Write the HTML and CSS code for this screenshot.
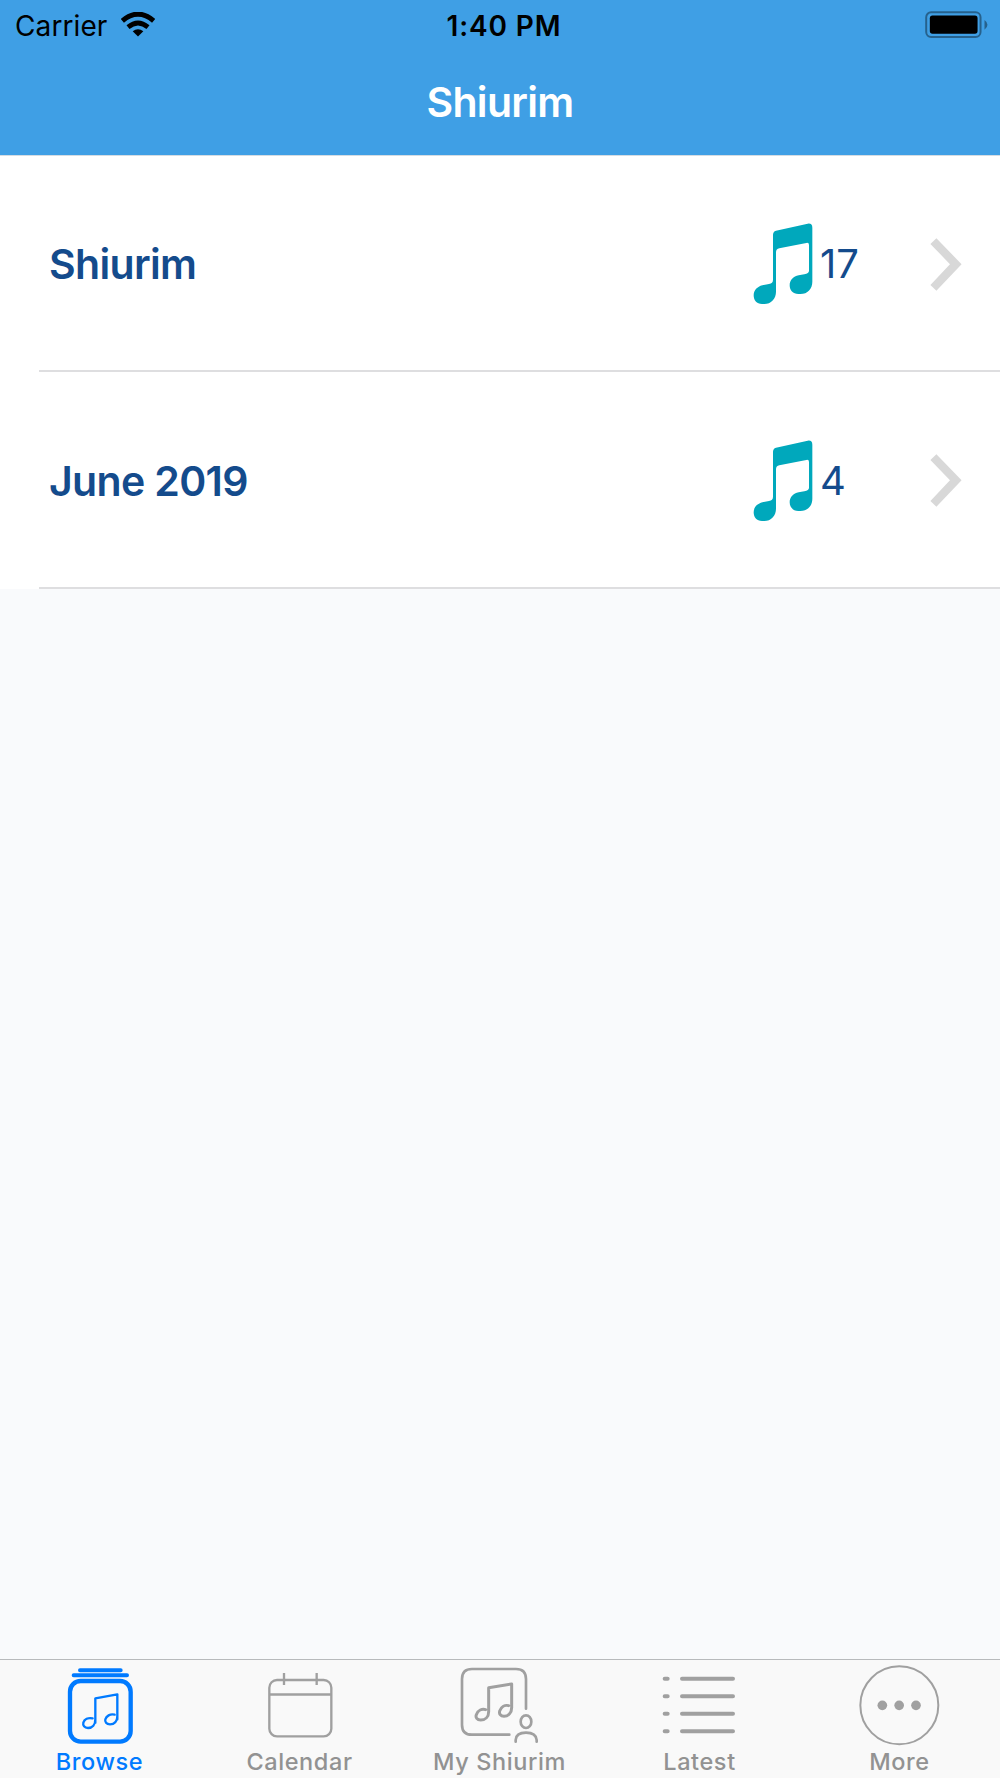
FILE: index.html
```html
<!DOCTYPE html>
<html lang="en">
<head>
<meta charset="utf-8">
<title>Shiurim</title>
<link rel="stylesheet" href="styles.css">
</head>
<body>
<svg class="defs" aria-hidden="true">
  <symbol id="note" viewBox="0 0 180 246">
    <path d="M69 23 L164 2 Q178 0 178 14 V176 C178 197 164 213 142 213 H136 C120 213 110 202 110 187 C110 171 121 161 137 157 L154 154 Q168 151 168 143 V66 Q168 58 160 60 L79 76 Q69 78 69 88 V206 C69 227 54 243 34 243 H27 C11 243 2 232 2 217 C2 202 13 191 28 187 L48 183 Q60 181 60 170 V36 Q60 25 69 23Z"/>
  </symbol>
  <symbol id="chevron" viewBox="0 0 96 160">
    <path d="M19 1 L95 79 L19 159 L1 142 L60 79 L1 18Z"/>
  </symbol>
</svg>
<div class="app">
  <header class="header">
    <div class="status">
      <div class="network">
        <span class="carrier">Carrier</span>
        <svg class="wifi" viewBox="0 0 102 74">
          <g fill="none" stroke="#000">
            <path d="M4 26 Q51 -14 98 26" stroke-width="15"/>
            <path d="M21 45 Q51 20 81 45" stroke-width="14"/>
          </g>
          <path d="M35 57 Q51 45 67 57 L51 73Z"/>
        </svg>
      </div>
      <time class="time">1:40 PM</time>
      <svg class="battery" viewBox="0 0 190 82">
        <rect x="3" y="4" width="165" height="75" rx="15" fill="none" stroke="#26618c" stroke-width="6"/>
        <rect x="14" y="14" width="145" height="55" rx="8"/>
        <path d="M180 27 Q189 33 189 42 Q189 51 180 57Z" fill="#26618c"/>
      </svg>
    </div>
    <h1 class="title">Shiurim</h1>
  </header>
  <main class="list">
    <section class="row">
      <h2 class="name">Shiurim</h2>
      <svg class="note"><use href="#note"/></svg>
      <span class="count">17</span>
      <svg class="chevron"><use href="#chevron"/></svg>
    </section>
    <section class="row">
      <h2 class="name">June 2019</h2>
      <svg class="note"><use href="#note"/></svg>
      <span class="count">4</span>
      <svg class="chevron"><use href="#chevron"/></svg>
    </section>
  </main>
  <nav class="tabs">
    <a class="tab active">
      <svg class="icon" viewBox="0 60 600 264">
        <path d="M240 90.500H362M221 106H381" stroke-width="12"/>
        <rect x="210" y="123" width="182" height="182" rx="32" stroke-width="13"/>
        <path d="M286 248V175L352 163V238M286 238C286 254 277 264 264 264C253 264 248 256 250 248C253 238 264 232 278 235M352 228C352 244 343 253 330 253C319 253 314 246 316 238C319 228 330 221 344 224" stroke-width="7"/>
      </svg>
      <span class="label">Browse</span>
    </a>
    <a class="tab">
      <svg class="icon" viewBox="0 60 600 264">
        <rect x="208" y="120" width="186" height="169" rx="23" stroke-width="7"/>
        <path d="M208 163.500H394M252 99V135M350 99V135" stroke-width="7" stroke-linecap="butt"/>
      </svg>
      <span class="label">Calendar</span>
    </a>
    <a class="tab">
      <svg class="icon" viewBox="0 60 600 264">
        <path d="M378 206V117Q378 87 348 87H216Q186 87 186 117V254Q186 284 216 284H328" stroke-width="8"/>
        <path d="M266 215V143L335 132V203M266 215C266 230 256 240 242 240C231 240 226 232 229 224C234 211 246 206 257 209M335 203C335 218 325 229 312 229C301 229 297 221 299 213C304 200 315 194 326 197" stroke-width="9"/>
        <ellipse cx="378" cy="245" rx="16" ry="19" stroke-width="8"/>
        <path d="M347 305V300Q348 278 378 278Q408 278 410 300V305" stroke-width="8"/>
      </svg>
      <span class="label">My Shiurim</span>
    </a>
    <a class="tab">
      <svg class="icon" viewBox="0 60 600 264">
        <path d="M194 116H203M246 116H399M194 168.500H203M246 168.500H399M194 221.500H203M246 221.500H399M194 274H203M246 274H399" stroke-width="12"/>
      </svg>
      <span class="label">Latest</span>
    </a>
    <a class="tab">
      <svg class="icon" viewBox="0 60 600 264">
        <circle cx="298" cy="196" r="117" stroke-width="6"/>
        <g fill="#a0a0a0" stroke="none">
          <circle cx="247" cy="196" r="14.500"/>
          <circle cx="297.500" cy="196" r="14.500"/>
          <circle cx="348" cy="196" r="14.500"/>
        </g>
      </svg>
      <span class="label">More</span>
    </a>
  </nav>
</div>
</body>
</html>
```
FILE: styles.css
```css
* { box-sizing: border-box; }

body {
  margin: 0;
  font-family: Inter, "Liberation Sans", sans-serif;
}

svg { display: block; flex: none; }

.defs { display: none; }

.app {
  display: flex;
  flex-direction: column;
  width: 1000px;
  height: 1778px;
  background: #f9fafc;
}

.header {
  height: 156px;
  background: #3f9fe5;
  border-bottom: 1px solid #d4dce3;
}

.status {
  display: grid;
  grid-template-columns: 1fr auto 1fr;
  height: 50px;
  padding: 0 12px 0 15px;
  line-height: 52px;
  color: #000;
}

.network { display: flex; }

.carrier {
  width: 106px;
  font-size: 28px;
  letter-spacing: 0.1px;
}

.wifi { width: 34px; height: 25px; margin-top: 12px; }

.time {
  padding-left: 5px;
  font-size: 28px;
  font-weight: 600;
  letter-spacing: 0.9px;
}

.battery {
  width: 63px;
  height: 27px;
  margin-top: 11px;
  justify-self: end;
}

.title {
  margin: 22px 0 0;
  font-size: 41px;
  font-weight: 600;
  line-height: 60px;
  letter-spacing: -0.7px;
  text-align: center;
  color: #fff;
}

.list { flex: 1; }

.row {
  display: flex;
  align-items: center;
  height: 216px;
  padding: 0 38px 0 49px;
  background: linear-gradient(#dedee0, #dedee0) 39px 100% / 100% 2px no-repeat #fff;
}

.row + .row { height: 217px; }

.name {
  flex: 1;
  margin: 0;
  font-size: 41px;
  font-weight: 600;
  line-height: 60px;
  letter-spacing: -0.65px;
  color: #144b8c;
}

.note { width: 60px; height: 82px; margin-right: 7px; fill: #00a8bc; }

.count {
  width: 110px;
  font-size: 40px;
  line-height: 60px;
  color: #144b8c;
}

.chevron { width: 32px; height: 53px; fill: #d8d8d8; }

.tabs {
  display: grid;
  grid-template-columns: repeat(5, 200px);
  height: 119px;
  border-top: 1px solid #b8babc;
  background: #f9f9f9;
}

.tab {
  display: flex;
  flex-direction: column;
  align-items: center;
  color: #929292;
}

.icon {
  width: 200px;
  height: 88px;
  fill: none;
  stroke: #a0a0a0;
  stroke-linecap: round;
  stroke-linejoin: round;
}

.label {
  margin-right: 1px;
  font-size: 23.5px;
  font-weight: 450;
  line-height: 27px;
  letter-spacing: 0.6px;
}

.active { color: #007aff; }
.active .icon { stroke: #007aff; }
```
